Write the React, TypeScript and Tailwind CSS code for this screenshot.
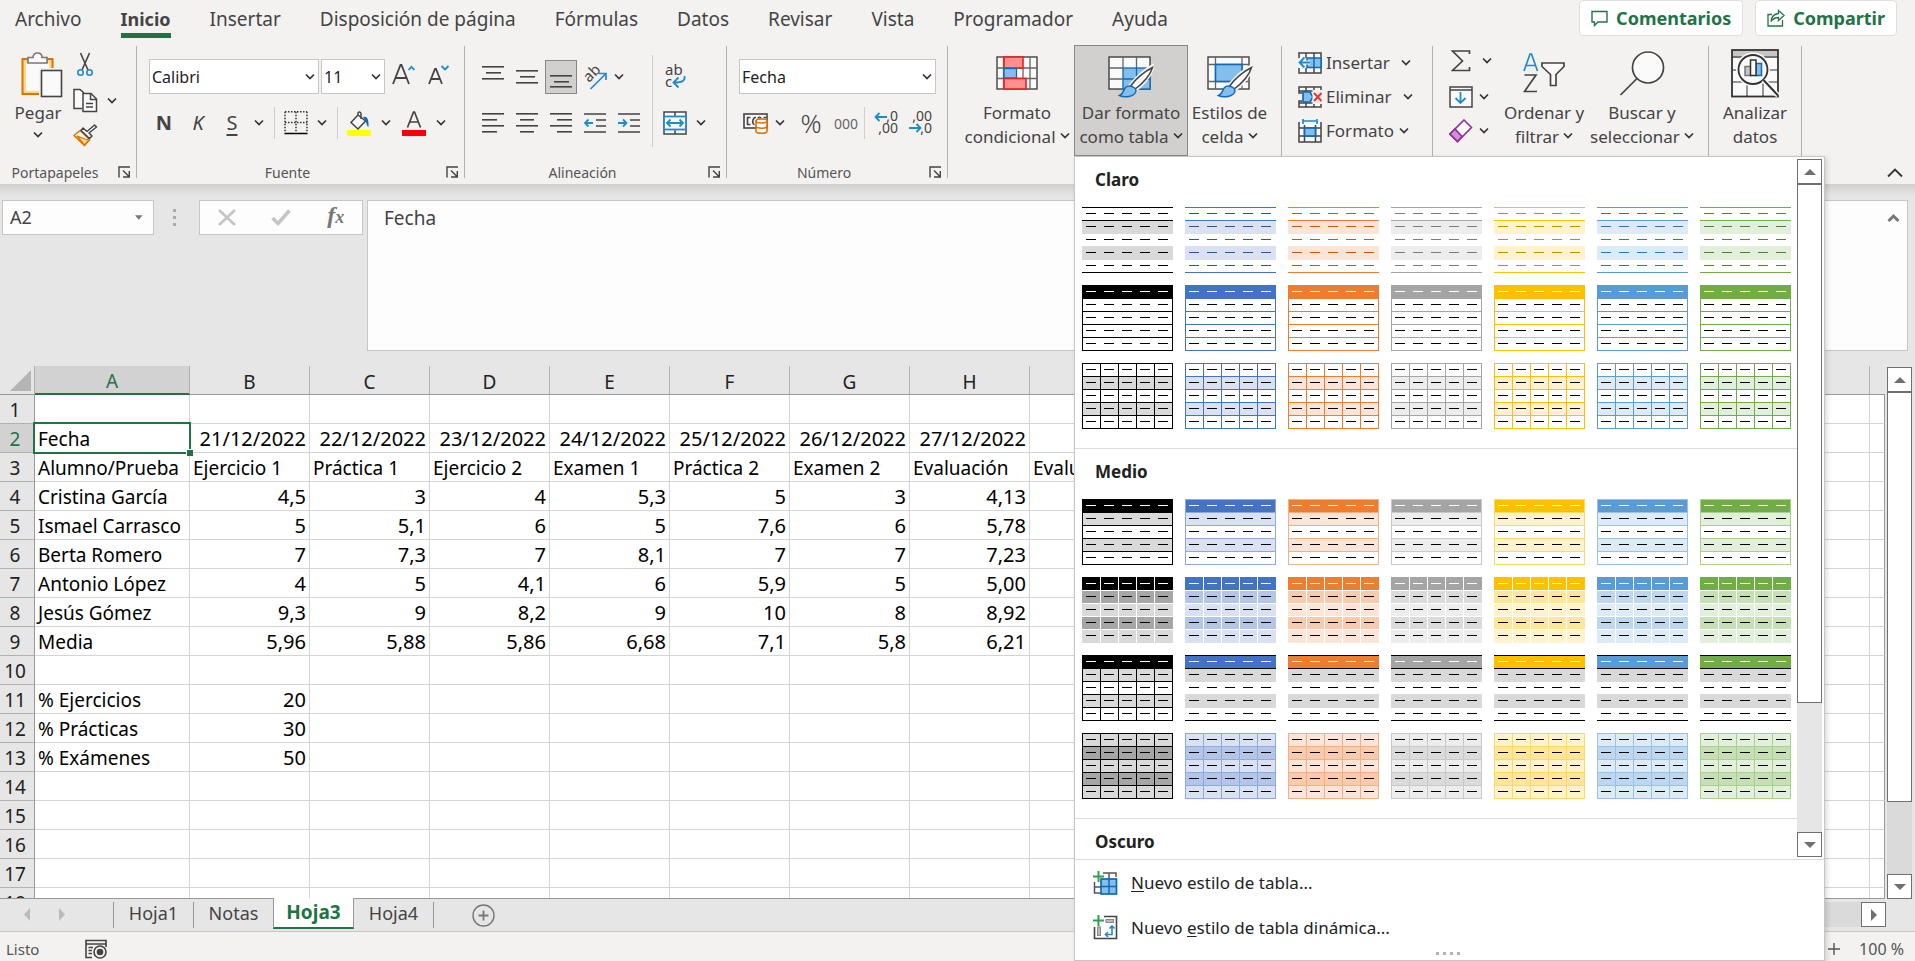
import React from 'react';

interface Palette {
  name: string;
  main: string;
  tint: string;
  tint2: string;
  mid: string;
  dark: string;
}

const PALETTES: Palette[] = [
  { name: 'negro', main: '#000000', tint: '#d9d9d9', tint2: '#a6a6a6', mid: '#000000', dark: '#000000' },
  { name: 'azul', main: '#4472c4', tint: '#d9e1f2', tint2: '#b4c6e7', mid: '#8ea9db', dark: '#305496' },
  { name: 'naranja', main: '#ed7d31', tint: '#fce4d6', tint2: '#f8cbad', mid: '#f4b084', dark: '#c65911' },
  { name: 'gris', main: '#a5a5a5', tint: '#ededed', tint2: '#dbdbdb', mid: '#c9c9c9', dark: '#7b7b7b' },
  { name: 'oro', main: '#ffc000', tint: '#fff2cc', tint2: '#ffe699', mid: '#ffd966', dark: '#bf8f00' },
  { name: 'azul claro', main: '#5b9bd5', tint: '#ddebf7', tint2: '#bdd7ee', mid: '#9bc2e6', dark: '#2f75b5' },
  { name: 'verde', main: '#70ad47', tint: '#e2efda', tint2: '#c6e0b4', mid: '#a9d08e', dark: '#548235' },
];

type Kind = 'lines' | 'boxed' | 'grid' | 'banded' | 'tiles' | 'ruled' | 'filled';

interface ThumbSpec {
  rows: string[];
  h: number[];
  v: number[];
  line: string;
  headerDash: string;
  dash: string;
}

const ALL = [0, 1, 2, 3, 4, 5];
const INNER = [1, 2, 3, 4];

// Row fills, rule positions and dash colours for every preset
const getSpec = (kind: Kind, p: Palette): ThumbSpec => {
  const w = '#ffffff';
  const k = '#000000';
  switch (kind) {
    case 'lines':
      return { rows: [w, p.tint, w, p.tint, w], h: [0, 1, 5], v: [], line: p.main, headerDash: p.dark, dash: p.dark };
    case 'boxed':
      return { rows: [p.main, w, w, w, w], h: ALL, v: [0, 5], line: p.main, headerDash: w, dash: k };
    case 'grid':
      return { rows: [w, p.tint, w, p.tint, w], h: ALL, v: ALL, line: p.main, headerDash: k, dash: k };
    case 'banded':
      return { rows: [p.main, p.tint, w, p.tint, w], h: ALL, v: [0, 5], line: p.mid, headerDash: w, dash: k };
    case 'tiles':
      return { rows: [p.main, p.tint2, p.tint, p.tint2, p.tint], h: INNER, v: INNER, line: w, headerDash: w, dash: k };
    case 'ruled':
      return p.main === k
        ? { rows: [k, '#d9d9d9', w, '#d9d9d9', w], h: ALL, v: ALL, line: k, headerDash: w, dash: k }
        : { rows: [p.main, '#d9d9d9', w, '#d9d9d9', w], h: [0, 1, 5], v: [], line: k, headerDash: w, dash: k };
    default:
      return { rows: [p.tint, p.tint2, p.tint, p.tint2, p.tint], h: ALL, v: ALL, line: p.mid, headerDash: k, dash: k };
  }
};

const StyleThumb: React.FC<{ kind: Kind; palette: Palette }> = ({ kind, palette }) => {
  const spec = getSpec(kind, palette);
  return (
    <button type="button" aria-label={`Estilo de tabla ${palette.name}`} className="block h-[66px] w-[91px]">
      <svg width="91" height="66" shapeRendering="crispEdges">
        {[0, 2, 4, 1, 3].map((i) => (
          <rect key={i} x="0" y={i * 13} width="91" height={i === 0 || i === 2 ? 13 : 14} fill={spec.rows[i]} />
        ))}
        {spec.v.map((i) => (
          <rect key={i} x={i * 18} y={kind === 'ruled' ? 13 : 0} width="1" height={kind === 'ruled' ? 53 : 66} fill={spec.line} />
        ))}
        {spec.h.map((i) => (
          <rect key={i} x="0" y={i * 13} width="91" height="1" fill={spec.line} />
        ))}
        {[0, 1, 2, 3, 4].map((r) =>
          [0, 1, 2, 3, 4].map((c) => (
            <rect key={`${r}${c}`} x={4 + c * 18} y={6 + r * 13} width="10" height="1" fill={r ? spec.dash : spec.headerDash} />
          ))
        )}
      </svg>
    </button>
  );
};

const StyleSection: React.FC<{ title: string; kinds: Kind[] }> = ({ title, kinds }) => (
  <section className="border-b border-[#dcdcdc] pb-[19px]">
    <h3 className="pt-[10px] pl-5 pb-[15px] text-[17px] leading-[25px] font-bold text-[#222]">{title}</h3>
    <div className="grid grid-cols-[repeat(7,91px)] gap-3 pl-[7px]">
      {kinds.map((kind) => PALETTES.map((p) => <StyleThumb key={kind + p.name} kind={kind} palette={p} />))}
    </div>
  </section>
);

const Chevron: React.FC<{ className?: string }> = ({ className = '' }) => (
  <svg className={`inline-block shrink-0 ${className}`} width="10" height="8" viewBox="0 0 10 8" fill="none" stroke="#333" strokeWidth="1.7">
    <path d="M1 1.5 5 5.5 9 1.5" />
  </svg>
);

const DropButton: React.FC<{ label: string; className: string }> = ({ label, className }) => (
  <button type="button" aria-label={label} className={`flex h-8 shrink-0 items-center justify-center ${className}`}>
    <Chevron />
  </button>
);

interface IconButtonProps {
  label: string;
  className?: string;
  children: React.ReactNode;
}

const IconButton: React.FC<IconButtonProps> = ({ label, className = 'w-[34px]', children }) => (
  <button type="button" aria-label={label} className={`flex h-[34px] shrink-0 items-center justify-center ${className}`}>
    {children}
  </button>
);

const Group: React.FC<{ label?: string; className: string; children: React.ReactNode }> = ({ label, className, children }) => (
  <div className={`flex h-[132px] shrink-0 flex-col border-r border-[#b3b0ad] ${className}`}>
    <div className="flex flex-1">{children}</div>
    {label && (
      <div className="flex h-3 items-center pr-[5px] text-[14px] leading-3 text-[#555]">
        <span className="flex-1 pt-px pr-2 text-center">{label}</span>
        <button type="button" aria-label={`Opciones de ${label}`}>
          <svg width="13" height="12" viewBox="0 0 13 12" fill="none" stroke="#444" strokeWidth="1.4">
            <path d="M1 11.5V1H12M5 4.5 11 10.5M11.3 5V11H5" />
          </svg>
        </button>
      </div>
    )}
  </div>
);

const Combo: React.FC<{ label: string; value: string; className: string }> = ({ label, value, className }) => (
  <div className={`relative shrink-0 ${className}`}>
    <select aria-label={label} defaultValue={value} className="h-[35px] w-full appearance-none border border-[#c8c6c4] bg-white pl-[2px] text-[16px] text-[#222]">
      <option>{value}</option>
    </select>
    <Chevron className="pointer-events-none absolute top-[14px] right-[4px]" />
  </div>
);

const LinesIcon: React.FC<{ lines: number[][] }> = ({ lines }) => (
  <svg width="22" height="22" fill="#444">
    {lines.map(([x, y, w]) => (
      <rect key={y} x={x} y={y} width={w} height="1.6" />
    ))}
  </svg>
);

const IndentIcon: React.FC<{ right?: boolean }> = ({ right = false }) => (
  <svg width="22" height="22" fill="none" stroke="#444" strokeWidth="1.6">
    <path d="M0 2H22M12 8H22M12 14H22M0 20H22" />
    <path d={right ? 'M0 11H8M5 7.5 8.5 11 5 14.5' : 'M1 11H9M4.5 7.5 1 11 4.5 14.5'} stroke="#1e8bcd" strokeWidth="1.8" />
  </svg>
);

const PasteIcon = () => (
  <svg className="ml-[7px]" width="42" height="46" viewBox="0 0 42 46">
    <rect x="1.5" y="7" width="30" height="35" fill="#fbd98d" stroke="#e07000" strokeWidth="2" />
    <rect x="5" y="11" width="23" height="28" fill="#fafafa" />
    <path d="M7 11V5.500H12C12 2.500 14 1 16.500 1S21 2.500 21 5.500H26V11Z" fill="#fafafa" stroke="#777" strokeWidth="1.6" />
    <rect x="18" y="16" width="24" height="30" fill="#f3f2f1" />
    <rect x="20.500" y="18.500" width="20" height="26" fill="#fafafa" stroke="#444" strokeWidth="1.6" />
  </svg>
);

const CutIcon = () => (
  <svg width="16" height="25" viewBox="0 0 16 25" fill="none" strokeWidth="1.6">
    <path d="M3.500 1 11 18M12.500 1 5 18" stroke="#444" />
    <circle cx="3.500" cy="20.500" r="2.700" stroke="#1e8bcd" />
    <circle cx="12.500" cy="20.500" r="2.700" stroke="#1e8bcd" />
  </svg>
);

const CopyIcon = () => (
  <svg width="25" height="25" viewBox="0 0 25 25" fill="#fafafa" stroke="#444" strokeWidth="1.5">
    <path d="M9 20.500H1V1.500H7L11 5" />
    <path d="M10 5.500H18L23.500 11V23.500H10Z" />
    <path d="M17.500 5.500V11.500H23.500M13 15.500H20M13 19H20" fill="none" />
  </svg>
);

const PainterIcon = () => (
  <svg width="25" height="23" viewBox="0 0 25 23" strokeWidth="1.500" strokeLinejoin="round">
    <path d="M7 6.500 1 11.500 11.500 21.500 16.500 15.500Z" fill="#fafafa" stroke="#e07000" />
    <path d="M4 12 12 15 16 16 11.500 21Z" fill="#fbd98d" stroke="#e07000" strokeWidth="1.200" />
    <path d="M10 4 8 6.500 16.500 14.500 19 12 16 9 23.500 3 21.500 1 14 7.500Z" fill="#fafafa" stroke="#444" />
  </svg>
);

const BordersIcon = () => (
  <svg width="24" height="24" viewBox="0 0 24 24" fill="none" stroke="#333" strokeWidth="1.500">
    <path d="M1 .8H23M1 11.500H23M1 .8V21M12 .8V21M23 .8V21" strokeDasharray="1.500 1.500" />
    <path d="M.5 22.500H23.500" stroke="#000" />
  </svg>
);

const FillIcon = () => (
  <svg width="24" height="25" viewBox="0 0 24 25">
    <path d="M11 4 4 11.500 11 18 18.500 10 11 4V2.500C11 .5 14 .5 14 3V8" fill="#fafafa" stroke="#444" strokeWidth="1.500" />
    <path d="M16 6C20 5 22 8 21.500 16 19.500 15 19.500 11 18 9Z" fill="#0f6ab4" />
    <rect y="19" width="24" height="6" fill="#ff0" />
  </svg>
);

const FontColorIcon = () => (
  <svg width="24" height="25" viewBox="0 0 24 25">
    <path d="M5.500 16.500 11.500 1H12.500L18.500 16.500M8 11H16" fill="none" stroke="#444" strokeWidth="1.700" />
    <rect y="19" width="24" height="6" fill="#f00" />
  </svg>
);

const GrowFontIcon: React.FC<{ shrink?: boolean }> = ({ shrink = false }) => (
  <svg width="24" height="24" viewBox="0 0 24 24" fill="none" strokeWidth="1.800">
    <path d={shrink ? 'M1 20 7 5H8L14 20M3.500 15H11.500' : 'M1 20 8.500 1H9.500L17 20M4 14H14'} stroke="#444" />
    <path d={shrink ? 'M13.500 2 17 5.500 20.500 2' : 'M16.500 6 19.500 2.800 22.500 6'} stroke="#1e8bcd" />
  </svg>
);

const OrientIcon = () => (
  <svg className="overflow-visible" width="26" height="27" viewBox="0 0 26 27" fill="none">
    <text transform="translate(7 19) rotate(-45)" fontSize="15" fill="#444" fontFamily="Noto Sans">ab</text>
    <path d="M8.500 25 24 9.500M17 9.500H24V16" stroke="#1e8bcd" strokeWidth="1.700" />
  </svg>
);

const WrapIcon = () => (
  <svg className="overflow-visible" width="22" height="26" viewBox="0 0 22 26" fill="none">
    <text x="1" y="11" fontSize="15" fill="#444" fontFamily="Noto Sans">ab</text>
    <text x="1" y="23" fontSize="15" fill="#444" fontFamily="Noto Sans">c</text>
    <path d="M20.500 12C21.500 17 18 18.500 10 18.500M14.500 13.500 9.500 18.500 14.500 23.500" stroke="#1e8bcd" strokeWidth="1.800" />
  </svg>
);

const MergeIcon = () => (
  <svg width="24" height="24" viewBox="0 0 24 24" fill="#fafafa" stroke="#444" strokeWidth="1.500">
    <rect x="1" y="1" width="22" height="22" />
    <path d="M12 1V5M12 19V23" />
    <rect x="1" y="5.500" width="22" height="13" stroke="#1e8bcd" strokeWidth="1.800" />
    <path d="M4 12H20M7.500 8.500 4 12 7.500 15.500M16.500 8.500 20 12 16.500 15.500" fill="none" stroke="#1e8bcd" strokeWidth="1.800" />
  </svg>
);

const CurrencyIcon = () => (
  <svg width="25" height="22" viewBox="0 0 25 22" fill="none" strokeWidth="1.600">
    <rect x="1" y="2" width="23" height="14" stroke="#444" fill="#fafafa" />
    <path d="M7.500 5.500H4.500V12.500H7.500M13 5.500C9 5 9 13 11.500 12.500M15 6.500C15 5 18 5 18 6.500M23 5.500H20.500" stroke="#444" />
    <path d="M13 9V19C13 22 24 22 24 19V9Z" fill="#fff" stroke="#e07000" />
    <ellipse cx="18.500" cy="9" rx="5.500" ry="2" fill="#fff" stroke="#e07000" />
    <path d="M13 14C13 17 24 17 24 14" stroke="#e07000" />
  </svg>
);

const DecimalIcon: React.FC<{ less?: boolean }> = ({ less = false }) => (
  <svg className="overflow-visible" width="25" height="26" viewBox="0 0 25 26" fontFamily="Noto Sans" fontSize="14" fill="#444">
    <text x="24" y="11" textAnchor="end">{less ? ',00' : ',0'}</text>
    <text x="24" y="23" textAnchor="end">{less ? ',0' : ',00'}</text>
    <path d={less ? 'M1 18H12.500M8.500 14 12.500 18 8.500 22' : 'M13 7H1.500M5.500 3 1.500 7 5.500 11'} fill="none" stroke="#1e8bcd" strokeWidth="1.800" />
  </svg>
);

const ConditionalIcon = () => (
  <svg width="42" height="34" viewBox="0 0 42 34" fill="#fafafa" stroke="#666" strokeWidth="1.300">
    <rect x="1" y="1" width="40" height="32" stroke="#333" />
    <path d="M7.500 1V33M34 1V33M1 12H41M1 22.500H41M27 12V22.500" />
    <rect x="8" y="1" width="19" height="11" fill="#ff9090" stroke="#e32222" strokeWidth="1.600" />
    <rect x="8" y="12.500" width="12.500" height="9.500" fill="#83beec" stroke="#0f6ab4" />
    <rect x="8" y="22.500" width="22" height="10.500" fill="#ff9090" stroke="#e32222" strokeWidth="1.600" />
  </svg>
);

const Brush = () => (
  <g strokeWidth="1.500">
    <path d="M45 10C36 15 27 24 22 30L26 35C34 29 42 20 45 10Z" fill="#fafafa" stroke="#f3f2f1" strokeWidth="4" />
    <path d="M44.500 11.500C36 15.500 27 24 23 29.500L26.500 33.500C34 28 42 20 44.500 11.500Z" fill="#fafafa" stroke="#444" />
    <path d="M11.500 39.500C16 38 15 34 17.500 31.500 21 28.500 28 31 28 35 27 41 16 42 11.500 39.500Z" fill="#83beec" stroke="#0f6ab4" />
  </g>
);

const TableStyleIcon = () => (
  <svg width="46" height="42" viewBox="0 0 46 42" fill="#fafafa" stroke="#666" strokeWidth="1.300">
    <rect x="1" y="1" width="41" height="32" stroke="#333" />
    <rect x="15" y="12" width="27" height="21" fill="#83beec" stroke="#0f6ab4" />
    <path d="M15 1V12M28.500 1V12M1 12H15M1 23H15" />
    <path d="M28.500 12V33M15 23H42" stroke="#0f6ab4" />
    <Brush />
  </svg>
);

const CellStyleIcon = () => (
  <svg width="46" height="42" viewBox="0 0 46 42" fill="#fafafa" stroke="#666" strokeWidth="1.300">
    <rect x="1" y="1" width="41" height="32" stroke="#333" />
    <path d="M8.500 1V33M1 8.500H42M1 25.500H42M35 1V33" />
    <rect x="8.500" y="8.500" width="26.500" height="17" fill="#83beec" stroke="#0f6ab4" strokeWidth="1.600" />
    <Brush />
  </svg>
);

const InsertCellsIcon = () => (
  <svg width="24" height="22" viewBox="0 0 24 22" fill="#fafafa" stroke="#444" strokeWidth="1.500">
    <path d="M1 6V1H23V21H1V16M8 1V6M16 1V21M8 16V21" />
    <rect x="9" y="6" width="14" height="9.500" fill="#83beec" stroke="#0f6ab4" />
    <path d="M16 6V15.500" stroke="#0f6ab4" />
    <path d="M12 10.500H1.500M6.500 5.500 1.500 10.500 6.500 15.500" fill="none" stroke="#f3f2f1" strokeWidth="4" />
    <path d="M12 10.500H1.500M6.500 5.500 1.500 10.500 6.500 15.500" fill="none" stroke="#1e8bcd" strokeWidth="1.800" />
  </svg>
);

const DeleteCellsIcon = () => (
  <svg width="24" height="22" viewBox="0 0 24 22" fill="#fafafa" stroke="#444" strokeWidth="1.500">
    <path d="M1 1H23V5H1ZM1 17H23V21H1ZM8 1V5M16 1V5M8 17V21M16 17V21M1 5V7H4M1 17V15H4" />
    <path d="M5 6H12L15 11 12 16H5Z" fill="#83beec" stroke="#0f6ab4" strokeWidth="1.700" />
    <rect x="14.500" y="4" width="10" height="14" fill="#f3f2f1" stroke="none" />
    <path d="M16 7 23.500 15M23.500 7 16 15" stroke="#e33" strokeWidth="2" />
  </svg>
);

const FormatCellsIcon = () => (
  <svg width="24" height="24" viewBox="0 0 24 24" fill="#fafafa" stroke="#444" strokeWidth="1.500">
    <path d="M1 3V23H23V3M1 9H23M1 17H23M6.500 6V23M17.500 6V23" />
    <rect x="6.500" y="9" width="11" height="8" fill="#83beec" stroke="#0f6ab4" strokeWidth="1.700" />
    <path d="M5 2H19M5 0V5M19 0V5" stroke="#1e8bcd" strokeWidth="1.700" />
  </svg>
);

const SumIcon = () => (
  <svg width="20" height="22" viewBox="0 0 20 22" fill="none" stroke="#444" strokeWidth="1.700">
    <path d="M18.500 4V1H1.500L11.500 11 1.500 20.500H18.500V17" />
  </svg>
);

const FillDownIcon = () => (
  <svg width="24" height="22" viewBox="0 0 24 22" fill="#fafafa" stroke="#444" strokeWidth="1.500">
    <path d="M1 1H23V21H1ZM1 4H23" />
    <path d="M11.500 6V17M6.500 12 11.500 17 16.500 12" fill="none" stroke="#1e8bcd" strokeWidth="1.800" />
  </svg>
);

const EraserIcon = () => (
  <svg width="24" height="24" viewBox="0 0 24 24" fill="#fafafa" stroke="#922b9c" strokeWidth="1.600">
    <path d="M15 1 22.500 8.500 8.500 22.500 1 15Z" />
    <path d="M6 10 1 15 8.500 22.500 13 17.500Z" fill="#d08fd8" />
  </svg>
);

const SortIcon = () => (
  <svg width="42" height="42" viewBox="0 0 42 42" fill="none" strokeWidth="1.700">
    <path d="M1 18 7 1H8.500L14.500 18M3.500 12.500H12" stroke="#1e8bcd" />
    <path d="M1.500 22H13L1.500 38.500H14" stroke="#444" />
    <path d="M19 10H41V13.500L33 21.500V32.500H27.500V21.500L19 13.500Z" fill="#fafafa" stroke="#444" />
  </svg>
);

const SearchIcon = () => (
  <svg width="46" height="46" viewBox="0 0 46 46" stroke="#444" strokeWidth="1.700">
    <circle cx="29" cy="16.500" r="15.500" fill="#fafafa" />
    <path d="M18 27.500 1.500 44" />
  </svg>
);

const AnalyzeIcon = () => (
  <svg width="48" height="49" viewBox="0 0 48 49" fill="#fafafa" stroke="#777" strokeWidth="1.500">
    <rect x="1" y="1" width="46" height="46.500" stroke="none" />
    <rect x="1" y="1" width="46" height="6" fill="#c8c6c4" stroke="none" />
    <path d="M1 8H47" stroke="#444" />
    <path d="M1 21H47M1 33H47M16 34V47M32 34V47" />
    <rect x="1" y="1" width="46" height="46.500" fill="none" stroke="#333" strokeWidth="1.800" />
    <circle cx="22" cy="20.500" r="17" stroke="none" />
    <circle cx="22" cy="20.500" r="14.500" stroke="#333" strokeWidth="1.800" />
    <path d="M32.500 31 47 46.500" stroke="#fafafa" strokeWidth="5" />
    <path d="M32.500 31 47 46.500" stroke="#333" strokeWidth="2" />
    <rect x="14" y="17.500" width="6" height="9" fill="#c8c6c4" />
    <rect x="25" y="14.500" width="5.500" height="12" fill="#83beec" stroke="#0f6ab4" />
    <rect x="19.500" y="11" width="5.500" height="15.500" stroke="#333" />
  </svg>
);

interface BigButtonProps {
  lines: [string, string];
  icon: React.ReactNode;
  drop?: boolean;
  iconClass?: string;
  className: string;
}

const BigButton: React.FC<BigButtonProps> = ({ lines, icon, drop = true, iconClass = 'pt-[7px]', className }) => (
  <button type="button" className={`flex shrink-0 flex-col items-center pt-[3px] text-[17px] leading-6 whitespace-nowrap text-[#444] ${className}`}>
    <span className={`flex h-[52px] items-start ${iconClass}`}>{icon}</span>
    <span>{lines[0]}</span>
    <span>
      {lines[1]}
      {drop && <Chevron className="mb-1 ml-1" />}
    </span>
  </button>
);

const TABS = ['Archivo', 'Inicio', 'Insertar', 'Disposición de página', 'Fórmulas', 'Datos', 'Revisar', 'Vista', 'Programador', 'Ayuda'];

const TabBar = () => (
  <header className="flex h-[45px] items-start justify-between pr-[18px]">
    <nav className="flex h-[38px] gap-[39px] pl-[15px] text-[19px] leading-[38px] whitespace-nowrap text-[#444]">
      {TABS.map((tab) =>
        tab === 'Inicio' ? (
          <button key={tab} type="button" className="h-[38px] border-b-[5px] border-[#217346] text-[18px] leading-[33px] font-bold">
            <span className="block pt-[3px]">{tab}</span>
          </button>
        ) : (
          <button key={tab} type="button">{tab}</button>
        )
      )}
    </nav>
    <div className="flex gap-3 text-[18px] font-bold text-[#217346]">
      <button type="button" className="flex h-9 items-center gap-2 rounded border border-[#e1dfdd] bg-white px-[11px]">
        <svg width="17" height="17" viewBox="0 0 17 17" fill="none" stroke="#217346" strokeWidth="1.400">
          <path d="M1 1.500H16V12H7L3.500 15.500V12H1Z" />
        </svg>
        Comentarios
      </button>
      <button type="button" className="flex h-9 items-center gap-2 rounded border border-[#e1dfdd] bg-white px-[11px]">
        <svg width="18" height="18" viewBox="0 0 18 18" fill="none" stroke="#217346" strokeWidth="1.300">
          <path d="M5 5.500H1V17H15.500V11" />
          <path d="M4 12.500C4.500 7.500 7 5 11.500 4.500V1.500L17 6.500 11.500 11.500V8.500C8 8.500 6 9.500 4 12.500Z" />
        </svg>
        Compartir
      </button>
    </div>
  </header>
);

const ArrowIcon: React.FC<{ d: string }> = ({ d }) => (
  <svg width="12" height="12" viewBox="0 0 12 12" fill="#707070">
    <path d={d} />
  </svg>
);

const UP = 'M6 3 12 9H0Z';
const DOWN = 'M0 3H12L6 9Z';
const RIGHT = 'M3 0 9 6 3 12Z';

const ScrollButton: React.FC<{ label: string; d: string }> = ({ label, d }) => (
  <button type="button" aria-label={label} className="flex h-[25px] w-[25px] shrink-0 items-center justify-center border border-[#707070] bg-white">
    <ArrowIcon d={d} />
  </button>
);

const TableStyleMenu = () => (
  <div className="absolute top-full left-0 z-20 flex h-[805px] w-[751px] flex-col border border-[#c6c6c6] bg-white text-[#222] shadow-[2px_2px_5px_rgba(0,0,0,0.15)]">
    <div className="flex h-[703px] border-b border-[#dcdcdc]">
      <div className="flex-1 overflow-hidden">
        <StyleSection title="Claro" kinds={['lines', 'boxed', 'grid']} />
        <StyleSection title="Medio" kinds={['banded', 'tiles', 'ruled', 'filled']} />
        <StyleSection title="Oscuro" kinds={[]} />
      </div>
      <div className="my-[2px] mr-[2px] flex w-[25px] flex-col bg-[#e6e6e6]">
        <ScrollButton label="Subir" d={UP} />
        <div className="h-[519px] border border-[#707070] bg-white" />
        <div className="flex-1" />
        <ScrollButton label="Bajar" d={DOWN} />
      </div>
    </div>
    <div className="flex flex-col pt-px text-[17px]">
      <button type="button" className="flex h-[44px] items-center gap-[13px] pl-[18px]">
        <svg width="25" height="25" viewBox="0 0 25 25" fill="none" stroke="#555" strokeWidth="1.500">
          <path d="M10 2H23V6M16 2V8M1.500 11V22H8M1.500 16H8" />
          <rect x="8" y="8" width="15.500" height="15" fill="#83beec" stroke="#0f6ab4" strokeWidth="1.700" />
          <path d="M16 8V23M8 15.500H23.500" stroke="#0f6ab4" />
          <path d="M5.500 0V11M0 5.500H11" stroke="#2f9e4f" strokeWidth="2" />
        </svg>
        <span><u className="underline-offset-2">N</u>uevo estilo de tabla...</span>
      </button>
      <button type="button" className="flex h-[45px] items-center gap-[13px] pl-[18px]">
        <svg width="25" height="25" viewBox="0 0 25 25" fill="none" stroke="#444" strokeWidth="1.600">
          <path d="M11 1.500H23.500V23.500H1.500V12" />
          <rect x="13" y="4.500" width="7.500" height="3" fill="#bbb" stroke="#888" strokeWidth="1" />
          <rect x="4.500" y="12" width="3" height="8.500" fill="#bbb" stroke="#888" strokeWidth="1" />
          <path d="M12.500 19.500H19V11M16.500 13.500 19 11 21.500 13.500M15 17 12.500 19.500 15 22" stroke="#1e8bcd" />
          <path d="M5.500 0V11M0 5.500H11" stroke="#2f9e4f" strokeWidth="2" />
        </svg>
        <span>Nuevo <u className="underline-offset-2">e</u>stilo de tabla dinámica...</span>
      </button>
      <div className="flex justify-center gap-1 pt-[2px] pr-1">
        {[0, 1, 2, 3].map((i) => (
          <span key={i} className="h-[3px] w-[3px] bg-[#b0b4bf]" />
        ))}
      </div>
    </div>
  </div>
);

const Ribbon = () => (
  <div className="flex h-[139px] items-start pt-px text-[#444]">
    {/* Portapapeles */}
    <Group label="Portapapeles" className="w-[137px]">
      <button type="button" className="flex w-[60px] shrink-0 flex-col items-center pt-[6px] pl-4 text-[17px] leading-6">
        <PasteIcon />
        <span className="pt-[3px]">Pegar</span>
        <Chevron className="mt-[6px]" />
      </button>
      <div className="flex flex-col gap-[11px] pt-[6px] pl-[13px]">
        <button type="button" aria-label="Cortar" className="flex w-6 justify-center"><CutIcon /></button>
        <div className="flex items-center gap-[9px]">
          <button type="button" aria-label="Copiar"><CopyIcon /></button>
          <button type="button" aria-label="Opciones de copia" className="flex"><Chevron /></button>
        </div>
        <button type="button" aria-label="Copiar formato" className="w-6"><PainterIcon /></button>
      </div>
    </Group>

    {/* Fuente */}
    <Group label="Fuente" className="w-[328px]">
      <div className="flex flex-col pt-[13px]">
        <div className="flex gap-[2px] pl-3">
          <Combo label="Fuente" value="Calibri" className="w-[170px]" />
          <Combo label="Tamaño de fuente" value="11" className="w-[64px]" />
          <IconButton label="Aumentar tamaño"><GrowFontIcon /></IconButton>
          <IconButton label="Reducir tamaño"><GrowFontIcon shrink /></IconButton>
        </div>
        <div className="flex items-center pt-[12px] pl-[10px] text-[20px]">
          <IconButton label="Negrita"><b>N</b></IconButton>
          <IconButton label="Cursiva"><i>K</i></IconButton>
          <IconButton label="Subrayado"><u className="underline-offset-4">S</u></IconButton>
          <DropButton label="Tipos de subrayado" className="w-5" />
          <span className="mx-[5px] h-8 w-px bg-[#d0cecc]" />
          <IconButton label="Bordes" className="w-[32px]"><BordersIcon /></IconButton>
          <DropButton label="Más bordes" className="w-5" />
          <span className="mx-[5px] h-8 w-px bg-[#d0cecc]" />
          <IconButton label="Color de relleno" className="w-[32px]"><FillIcon /></IconButton>
          <DropButton label="Más rellenos" className="w-[22px]" />
          <IconButton label="Color de fuente"><FontColorIcon /></IconButton>
          <DropButton label="Más colores" className="w-5" />
        </div>
      </div>
    </Group>

    {/* Alineación */}
    <Group label="Alineación" className="w-[262px]">
      <div className="flex flex-col gap-[12px] pt-[14px] pl-[11px]">
        <div className="flex items-center">
          <IconButton label="Alinear arriba"><LinesIcon lines={[[0, 0, 22], [4, 6, 15], [0, 12, 22]]} /></IconButton>
          <IconButton label="Alinear en el medio"><LinesIcon lines={[[0, 4, 22], [4, 10, 15], [0, 16, 22]]} /></IconButton>
          <IconButton label="Alinear abajo" className="mx-px w-[32px] border border-[#8a8886] bg-[#d2d0ce]"><LinesIcon lines={[[0, 9, 22], [4, 15, 15], [0, 20, 22]]} /></IconButton>
          <IconButton label="Orientación"><OrientIcon /></IconButton>
          <DropButton label="Más orientaciones" className="w-[13px]" />
        </div>
        <div className="flex items-center">
          <IconButton label="Alinear a la izquierda"><LinesIcon lines={[[0, 1, 22], [0, 7, 15], [0, 13, 22], [0, 19, 15]]} /></IconButton>
          <IconButton label="Centrar"><LinesIcon lines={[[0, 1, 22], [4, 7, 14], [0, 13, 22], [4, 19, 14]]} /></IconButton>
          <IconButton label="Alinear a la derecha"><LinesIcon lines={[[0, 1, 22], [7, 7, 15], [0, 13, 22], [7, 19, 15]]} /></IconButton>
          <IconButton label="Disminuir sangría"><IndentIcon /></IconButton>
          <IconButton label="Aumentar sangría"><IndentIcon right /></IconButton>
        </div>
      </div>
      <span className="mt-[9px] ml-[6px] h-[92px] w-px bg-[#d0cecc]" />
      <div className="flex flex-col gap-[12px] pt-[14px] pl-[5px]">
        <IconButton label="Ajustar texto"><WrapIcon /></IconButton>
        <div className="flex items-center">
          <IconButton label="Combinar y centrar"><MergeIcon /></IconButton>
          <DropButton label="Más combinaciones" className="w-[18px]" />
        </div>
      </div>
    </Group>

    {/* Número */}
    <Group label="Número" className="w-[221px]">
      <div className="flex flex-col pt-[13px]">
        <div className="pl-3">
          <Combo label="Formato de número" value="Fecha" className="w-[197px]" />
        </div>
        <div className="flex items-center pt-[12px] pl-[11px]">
          <IconButton label="Formato contable"><CurrencyIcon /></IconButton>
          <DropButton label="Más monedas" className="w-4" />
          <IconButton label="Estilo porcentual" className="w-[46px] text-[26px] font-light">%</IconButton>
          <IconButton label="Estilo millares" className="w-[24px] text-[14px] text-[#666]">000</IconButton>
          <span className="mr-[4px] ml-[6px] h-8 w-px bg-[#d0cecc]" />
          <IconButton label="Aumentar decimales"><DecimalIcon /></IconButton>
          <IconButton label="Disminuir decimales"><DecimalIcon less /></IconButton>
        </div>
      </div>
    </Group>

    {/* Estilos */}
    <Group className="w-[334px]">
      <BigButton lines={['Formato', 'condicional']} icon={<ConditionalIcon />} className="w-[126px] pl-3" />
      <div className="relative -mt-px h-[111px] w-[114px]">
        <BigButton lines={['Dar formato', 'como tabla']} icon={<TableStyleIcon />} className="h-full w-full border border-[#8a8886] bg-[#d2d0ce]" />
        <TableStyleMenu />
      </div>
      <BigButton lines={['Estilos de', 'celda']} icon={<CellStyleIcon />} className="w-[83px]" />
    </Group>

    {/* Celdas */}
    <Group className="w-[151px]">
      <div className="flex flex-col text-[17px]">
        <button type="button" className="flex h-[34px] items-center gap-1 pl-4">
          <InsertCellsIcon />Insertar<Chevron className="ml-[7px]" />
        </button>
        <button type="button" className="flex h-[34px] items-center gap-1 pl-4">
          <DeleteCellsIcon />Eliminar<Chevron className="ml-[7px]" />
        </button>
        <button type="button" className="flex h-[34px] items-center gap-1 pl-4">
          <FormatCellsIcon />Formato<Chevron className="ml-px" />
        </button>
      </div>
    </Group>

    {/* Edición */}
    <Group className="w-[276px]">
      <div className="flex w-[68px] flex-col">
        <button type="button" aria-label="Autosuma" className="flex h-[34px] items-center gap-[11px] pb-[4px] pl-[18px]"><SumIcon /><Chevron /></button>
        <button type="button" aria-label="Rellenar" className="flex h-[34px] items-center gap-[6px] pl-4"><FillDownIcon /><Chevron /></button>
        <button type="button" aria-label="Borrar" className="flex h-[34px] items-center gap-[6px] pl-4"><EraserIcon /><Chevron /></button>
      </div>
      <BigButton lines={['Ordenar y', 'filtrar']} icon={<SortIcon />} iconClass="pt-1" className="w-[86px]" />
      <BigButton lines={['Buscar y', 'seleccionar']} icon={<SearchIcon />} iconClass="pt-[2px]" className="w-[110px]" />
    </Group>

    <Group className="w-[93px]">
      <BigButton lines={['Analizar', 'datos']} icon={<AnalyzeIcon />} drop={false} iconClass="pt-0" className="w-[92px]" />
    </Group>
    <div className="flex h-[132px] flex-1 items-end justify-end pr-3">
      <button type="button" aria-label="Contraer la cinta">
        <svg width="16" height="10" viewBox="0 0 16 10" fill="none" stroke="#333" strokeWidth="1.800">
          <path d="M1 8.500 8 1.500 15 8.500" />
        </svg>
      </button>
    </div>
  </div>
);

const FormulaBar = () => (
  <div className="flex h-[182px] items-start bg-[#e6e6e6] bg-linear-to-b from-[#d0d0d0] from-0% to-[#e6e6e6] to-[12px] pt-4 pr-[7px] pl-[2px]">
    <div className="flex h-[35px] w-[152px] items-center border border-[#c6c6c6] bg-[#fdfdfd] pr-[10px]">
      <input aria-label="Cuadro de nombres" defaultValue="A2" className="w-full min-w-0 pl-[7px] text-[18px] text-[#444] outline-none" />
      <svg width="8" height="5" viewBox="0 0 8 5" fill="#777"><path d="M0 0H8L4 5Z" /></svg>
    </div>
    <div className="flex h-[35px] w-[45px] flex-col items-center justify-center gap-1 pr-1">
      {[0, 1, 2].map((i) => (
        <span key={i} className="h-[3px] w-[3px] bg-[#aaa]" />
      ))}
    </div>
    <div className="flex h-[35px] w-[164px] items-center justify-around border border-[#c6c6c6] bg-[#fdfdfd]">
      <button type="button" aria-label="Cancelar">
        <svg width="18" height="17" viewBox="0 0 18 17" stroke="#c4c4c4" strokeWidth="2.500"><path d="M1 1 17 16M17 1 1 16" /></svg>
      </button>
      <button type="button" aria-label="Introducir">
        <svg width="20" height="17" viewBox="0 0 20 17" fill="none" stroke="#c4c4c4" strokeWidth="3.500"><path d="M1.500 9 7 14.500 18.500 1.500" /></svg>
      </button>
      <button type="button" aria-label="Insertar función" className="pb-1 font-['Liberation_Serif',serif] text-[24px] leading-7 font-bold text-[#777] italic">
        f<span className="text-[18px]">x</span>
      </button>
    </div>
    <div className="ml-1 flex h-[151px] flex-1 border border-[#c6c6c6] bg-[#fdfdfd]">
      <textarea aria-label="Barra de fórmulas" defaultValue="Fecha" className="flex-1 resize-none overflow-hidden pt-1 pl-[16px] text-[19px] leading-[26px] text-[#444] outline-none" />
      <button type="button" aria-label="Contraer barra" className="mt-[11px] mr-[7px] h-3">
        <svg width="13" height="10" viewBox="0 0 13 10" fill="none" stroke="#777" strokeWidth="3"><path d="M1.500 8 6.500 3 11.500 8" /></svg>
      </button>
    </div>
  </div>
);

const COLUMNS = ['A', 'B', 'C', 'D', 'E', 'F', 'G', 'H', 'I', 'J', 'K', 'L', 'M', 'N', 'O', ''];

const CELLS: Record<number, string[]> = {
  2: ['Fecha', '21/12/2022', '22/12/2022', '23/12/2022', '24/12/2022', '25/12/2022', '26/12/2022', '27/12/2022'],
  3: ['Alumno/Prueba', 'Ejercicio 1', 'Práctica 1', 'Ejercicio 2', 'Examen 1', 'Práctica 2', 'Examen 2', 'Evaluación', 'Evaluación'],
  4: ['Cristina García', '4,5', '3', '4', '5,3', '5', '3', '4,13'],
  5: ['Ismael Carrasco', '5', '5,1', '6', '5', '7,6', '6', '5,78'],
  6: ['Berta Romero', '7', '7,3', '7', '8,1', '7', '7', '7,23'],
  7: ['Antonio López', '4', '5', '4,1', '6', '5,9', '5', '5,00'],
  8: ['Jesús Gómez', '9,3', '9', '8,2', '9', '10', '8', '8,92'],
  9: ['Media', '5,96', '5,88', '5,86', '6,68', '7,1', '5,8', '6,21'],
  11: ['% Ejercicios', '20'],
  12: ['% Prácticas', '30'],
  13: ['% Exámenes', '50'],
};

const isNumeric = (value: string): boolean => /^[\d,/]+$/.test(value);

const Sheet = () => (
  <div className="flex min-h-0 flex-1 bg-[#e6e6e6]">
    <div className="min-w-0 flex-1 overflow-hidden border-b border-[#999]">
      <table className="w-full table-fixed border-separate border-spacing-0 text-[19px] leading-[26px] whitespace-nowrap text-black">
        <colgroup>
          <col className="w-[35px]" />
          <col className="w-[155px]" />
          {COLUMNS.slice(1, 15).map((c) => <col key={c} className="w-[120px]" />)}
          <col />
        </colgroup>
        <thead>
          <tr className="h-[29px] leading-[24px]">
            <th className="border-r border-b border-r-[#b1b1b1] border-b-[#999] p-0">
              <svg className="ml-[10px]" width="21" height="21" fill="#b4b4b4"><path d="M21 0V21H0Z" /></svg>
            </th>
            {COLUMNS.map((c, i) => (
              <th
                key={i}
                scope="col"
                className={
                  i === 0
                    ? 'border-r border-b-2 border-r-[#b1b1b1] border-b-[#217346] bg-[#d2d2d2] p-0 pt-[3px] font-normal text-[#217346]'
                    : i === 15
                      ? 'border-b border-[#999] p-0'
                      : 'border-r border-b border-r-[#b1b1b1] border-b-[#999] p-0 pt-[3px] font-normal text-[#222]'
                }
              >
                {c}
              </th>
            ))}
          </tr>
        </thead>
        <tbody>
          {Array.from({ length: 18 }, (_, r) => r + 1).map((row) => (
            <tr key={row} className="h-[29px]">
              <th
                scope="row"
                className={`border-r border-b border-r-[#999] border-b-[#b1b1b1] pt-[2px] pr-1 pb-0 pl-0 font-normal ${row === 2 ? 'bg-[#d2d2d2] text-[#217346]' : 'bg-[#e6e6e6] text-[#222]'}`}
              >
                {row}
              </th>
              {COLUMNS.map((c, i) => {
                const value = CELLS[row]?.[i] ?? '';
                return (
                  <td
                    key={i}
                    className={`relative border-r border-b border-b-[#d4d4d4] bg-white px-[3px] pt-[2px] pb-0 ${i === 15 ? 'border-r-[#999]' : 'border-r-[#d4d4d4]'} ${isNumeric(value) ? 'text-right text-[20px]' : ''}`}
                  >
                    {value}
                    {row === 2 && i === 0 && (
                      <span className="pointer-events-none absolute -inset-[2px] z-10 border-2 border-[#217346]">
                        <span className="absolute -right-[4px] -bottom-[4px] h-[7px] w-[7px] border-t border-l border-white bg-[#217346]" />
                      </span>
                    )}
                  </td>
                );
              })}
            </tr>
          ))}
        </tbody>
      </table>
    </div>
    <div className="flex w-[30px] shrink-0 flex-col pt-px pl-[2px]">
      <ScrollButton label="Desplazar arriba" d={UP} />
      <div className="h-[410px] w-[25px] border border-[#707070] bg-white" />
      <div className="w-[25px] flex-1 bg-[#dadada]" />
      <ScrollButton label="Desplazar abajo" d={DOWN} />
    </div>
  </div>
);

const SheetTabs = () => (
  <div className="flex h-[33px] items-start border-b border-[#c6c6c6] bg-[#e6e6e6] text-[18px] leading-[23px] text-[#444]">
    <div className="flex w-[113px] gap-[27px] pt-[9px] pl-[23px]">
      <button type="button" aria-label="Hoja anterior"><svg width="8" height="13" fill="#bbb"><path d="M7 0V13L1 6.500Z" /></svg></button>
      <button type="button" aria-label="Hoja siguiente"><svg width="8" height="13" fill="#bbb"><path d="M1 0V13L7 6.500Z" /></svg></button>
    </div>
    <button type="button" className="mt-[3px] h-[26px] w-[80px] border-l border-[#999] pb-[3px]">Hoja1</button>
    <button type="button" className="mt-[3px] h-[26px] w-[80px] border-l border-[#999] pb-[3px]">Notas</button>
    <button type="button" className="-mt-px h-[31px] w-[81px] border-x border-b-2 border-x-[#999] border-b-[#217346] bg-white text-[19px] font-bold text-[#217346]">Hoja3</button>
    <button type="button" className="mt-[3px] h-[26px] w-[80px] border-r border-[#999] pb-[3px]">Hoja4</button>
    <button type="button" aria-label="Hoja nueva" className="mt-[5px] ml-[38px]">
      <svg width="23" height="23" viewBox="0 0 23 23" fill="none" stroke="#777" strokeWidth="1.400">
        <circle cx="11.500" cy="11.500" r="10.500" />
        <path d="M11.500 6.500V16.500M6.500 11.500H16.500" strokeWidth="1.800" />
      </svg>
    </button>
    <div className="mt-[3px] mr-[29px] ml-auto flex h-[25px] w-[500px] justify-end bg-[#dadada]">
      <ScrollButton label="Desplazar a la derecha" d={RIGHT} />
    </div>
  </div>
);

const StatusBar = () => (
  <footer className="flex h-[29px] shrink-0 items-center pr-[11px] pl-[6px] text-[15px] text-[#555]">
    <span className="w-[79px] pt-[6px]">Listo</span>
    <button type="button" aria-label="Grabar macro" className="pt-[5px]">
      <svg width="22" height="20" viewBox="0 0 22 20" fill="none" stroke="#444" strokeWidth="1.600">
        <path d="M7 18.500H1V1.500H21V8M1 5H21M3.500 8.500H8M3.500 11.500H7M3.500 14.500H7" />
        <circle cx="15" cy="13" r="6" fill="#f3f2f1" />
        <circle cx="15" cy="13" r="2.500" fill="#444" />
      </svg>
    </button>
    <div className="ml-auto flex items-center gap-[19px] pt-1 text-[16px]">
      <button type="button" aria-label="Acercar">
        <svg width="12" height="12" stroke="#555" strokeWidth="1.400"><path d="M6 0V12M0 6H12" /></svg>
      </button>
      <span>100 %</span>
    </div>
  </footer>
);

const App: React.FC = () => (
  <div className="flex h-screen flex-col overflow-hidden bg-[#f3f2f1] font-['Noto_Sans','Open_Sans',sans-serif]">
    <TabBar />
    <Ribbon />
    <FormulaBar />
    <div className="flex min-h-0 flex-1 flex-col">
      <Sheet />
      <SheetTabs />
    </div>
    <StatusBar />
  </div>
);

export default App;
